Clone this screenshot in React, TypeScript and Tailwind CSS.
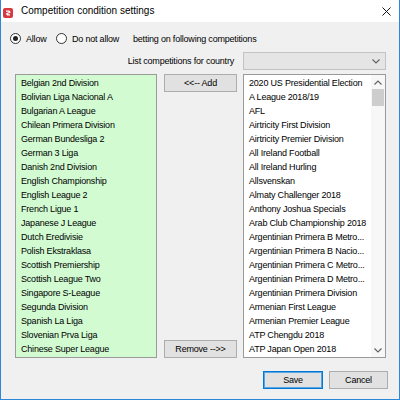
import React from "react";

const leftItems = [
    "Belgian 2nd Division",
    "Bolivian Liga Nacional A",
    "Bulgarian A League",
    "Chilean Primera Division",
    "German Bundesliga 2",
    "German 3 Liga",
    "Danish 2nd Division",
    "English Championship",
    "English League 2",
    "French Ligue 1",
    "Japanese J League",
    "Dutch Eredivisie",
    "Polish Ekstraklasa",
    "Scottish Premiership",
    "Scottish League Two",
    "Singapore S-League",
    "Segunda Division",
    "Spanish La Liga",
    "Slovenian Prva Liga",
    "Chinese Super League",
];

const rightItems = [
    "2020 US Presidential Election",
    "A League 2018/19",
    "AFL",
    "Airtricity First Division",
    "Airtricity Premier Division",
    "All Ireland Football",
    "All Ireland Hurling",
    "Allsvenskan",
    "Almaty Challenger 2018",
    "Anthony Joshua Specials",
    "Arab Club Championship 2018",
    "Argentinian Primera B Metro...",
    "Argentinian Primera B Nacio...",
    "Argentinian Primera C Metro...",
    "Argentinian Primera D Metro...",
    "Argentinian Primera Division",
    "Armenian First League",
    "Armenian Premier League",
    "ATP Chengdu 2018",
    "ATP Japan Open 2018",
];

function Radio({ checked }: { checked?: boolean }) {
    return (
        <div className="w-[11px] h-[11px] rounded-full border border-[#333] bg-white flex items-center justify-center shrink-0">
            {checked && <div className="w-[5px] h-[5px] rounded-full bg-[#222]" />}
        </div>
    );
}

function Chevron({ up }: { up?: boolean }) {
    return (
        <svg width="8" height="5" viewBox="0 0 8 5">
            <polyline
                points={up ? "0.5,4.5 4,1 7.5,4.5" : "0.5,0.5 4,4 7.5,0.5"}
                fill="none"
                stroke="#606060"
                strokeWidth="1.1"
            />
        </svg>
    );
}

function Button({ children, primary, className = "" }: { children: React.ReactNode; primary?: boolean; className?: string }) {
    return (
        <div
            className={`h-[18px] flex items-center justify-center bg-[#e1e1e1] border ${
                primary ? "border-[#0078d7] shadow-[inset_0_0_0_1px_#5aa4e0]" : "border-[#adadad]"
            } ${className}`}
        >
            {children}
        </div>
    );
}

export default function App() {
    return (
        <div
            className="w-[400px] h-[400px] flex flex-col border-l border-r border-b border-[#2b88d8] text-[9px] tracking-[-0.2px] text-black leading-[14px]"
            style={{ fontFamily: '"Liberation Sans", Arial, sans-serif' }}
        >
            {/* title bar */}
            <div className="h-[22px] bg-white flex items-center shrink-0">
                <svg width="10" height="10" viewBox="0 0 10 10" className="ml-[2px] mt-[4px]">
                    <rect width="10" height="10" rx="2" fill="#d6393f" />
                    <path d="M3 3.2 L6.2 3.2 L6.8 4.2 L3.8 5.8 L4.4 6.8 L7 6.8" fill="none" stroke="#fff" strokeWidth="1.3" />
                </svg>
                <span className="ml-[8px] text-[10px] tracking-normal">Competition condition settings</span>
                <svg width="9" height="9" viewBox="0 0 9 9" className="ml-auto mr-[8px]">
                    <path d="M0.5 0.5 L8.5 8.5 M8.5 0.5 L0.5 8.5" stroke="#111" strokeWidth="1" />
                </svg>
            </div>

            {/* body */}
            <div className="flex-1 bg-[#f0f0f0] flex flex-col">
                <div className="mt-[11px] h-[11px] flex items-center pl-[9px]">
                    <Radio checked />
                    <span className="ml-[5px] w-[30px]">Allow</span>
                    <Radio />
                    <span className="ml-[5px] w-[61px]">Do not allow</span>
                    <span>betting on following competitions</span>
                </div>

                <div className="mt-[8px] h-[18px] flex items-center justify-end pr-[13px]">
                    <span>List competitions for country</span>
                    <div className="ml-[9px] w-[143px] h-[18px] bg-[#e5e5e5] border border-[#c2c2c2] flex items-center justify-end pr-[5px]">
                        <Chevron />
                    </div>
                </div>

                <div className="mt-[4px] h-[284px] flex pl-[14px]">
                    <div className="w-[142px] h-full bg-[#d2fbd2] border border-[#9a9a9a] pt-[1px] pl-[5px] overflow-hidden">
                        {leftItems.map((item) => (
                            <div key={item} className="h-[14px] whitespace-nowrap">
                                {item}
                            </div>
                        ))}
                    </div>

                    <div className="ml-[7px] w-[73px] flex flex-col justify-between">
                        <Button>&lt;&lt;-- Add</Button>
                        <Button>Remove --&gt;&gt;</Button>
                    </div>

                    <div className="ml-[6px] w-[143px] h-full bg-white border border-[#9a9a9a] flex overflow-hidden">
                        <div className="flex-1 pt-[1px] pl-[5px] overflow-hidden">
                            {rightItems.map((item) => (
                                <div key={item} className="h-[14px] whitespace-nowrap">
                                    {item}
                                </div>
                            ))}
                        </div>
                        <div className="w-[14px] h-full bg-[#f7f7f7] flex flex-col">
                            <div className="h-[14px] flex items-center justify-center">
                                <Chevron up />
                            </div>
                            <div className="mx-[1px] h-[17px] bg-[#cdcdcd]" />
                            <div className="flex-1" />
                            <div className="h-[14px] flex items-center justify-center">
                                <Chevron />
                            </div>
                        </div>
                    </div>
                </div>

                <div className="mt-[13px] h-[18px] flex justify-end pr-[11px]">
                    <Button primary className="w-[60px]">Save</Button>
                    <Button className="ml-[6px] w-[59px]">Cancel</Button>
                </div>
            </div>
        </div>
    );
}
